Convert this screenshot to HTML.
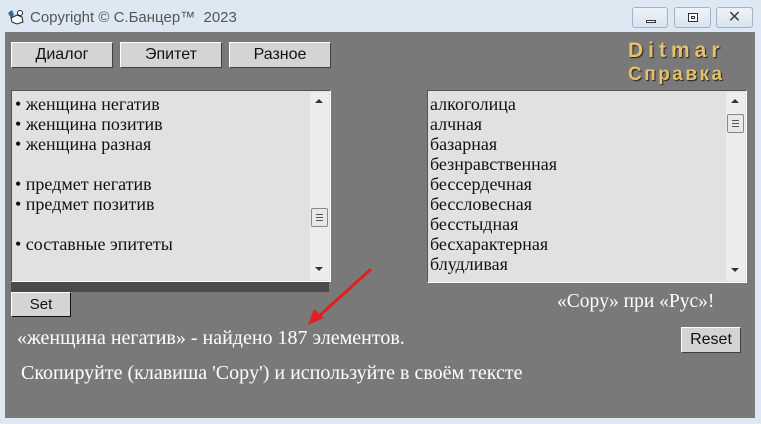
<!DOCTYPE html>
<html><head><meta charset="utf-8"><style>
*{margin:0;padding:0;box-sizing:border-box}
body{width:761px;height:424px;background:#dde8f3;position:relative;overflow:hidden;font-family:"Liberation Serif",serif}
.t{position:absolute;left:30px;top:9px;font:15px "Liberation Sans",sans-serif;color:#555}
.wb{position:absolute;top:7px;height:21px;border:1px solid #9fb2c7;border-radius:3px;background:linear-gradient(#eef3f8,#d9e3ee)}
.main{position:absolute;left:5px;top:32px;width:750px;height:386px;background:#797979}
.btn{position:absolute;background:#d4d4d4;border:1px solid;border-color:#fff #404040 #404040 #fff;font:16px "Liberation Sans",sans-serif;color:#111;text-align:center}
.list{position:absolute;background:#e1e1e1;border:1px solid;border-color:#555 #fff #fff #555;font-size:18px;color:#111;line-height:20px;white-space:nowrap}
.sb{position:absolute;right:1px;top:1px;bottom:1px;width:19px;background:#ececec}
.ar{position:absolute;left:5px;width:0;height:0;border-left:4px solid transparent;border-right:4px solid transparent}
.th{position:absolute;left:1px;width:17px;height:19px;background:#e8e8e8;border:1px solid #888;border-radius:2px}
.th i{position:absolute;left:4px;width:7px;height:1px;background:#555}
.w{position:absolute;color:#fff;font-size:20px;white-space:nowrap}
</style></head><body>
<svg style="position:absolute;left:6px;top:9px" width="20" height="17"><path d="M2 4l4-3 2 5-3 3z" fill="#3a6a8a"/><path d="M5 9l6-3 5 2 1 5-6 2-5-2z" fill="#fff" stroke="#222"/><circle cx="14" cy="4" r="2.5" fill="#fff" stroke="#222"/></svg>
<div class="t">Copyright © С.Банцер™&nbsp; 2023</div>
<div class="wb" style="left:632px;width:36px"><div style="position:absolute;left:13px;top:12px;width:10px;height:3px;background:#fff;border:1px solid #333"></div></div>
<div class="wb" style="left:674px;width:37px"><div style="position:absolute;left:13px;top:5px;width:10px;height:9px;border:1px solid #333;background:#fff"><div style="margin:2px;width:4px;height:3px;border:1px solid #333"></div></div></div>
<div class="wb" style="left:716px;width:37px;text-align:center;font:16px 'Liberation Sans',sans-serif;line-height:19px;color:#444">✕</div>
<div class="main"></div>
<div class="btn" style="left:11px;top:42px;width:102px;height:26px;line-height:24px">Диалог</div>
<div class="btn" style="left:120px;top:42px;width:102px;height:26px;line-height:24px">Эпитет</div>
<div class="btn" style="left:229px;top:42px;width:102px;height:26px;line-height:24px">Разное</div>
<div style="position:absolute;left:628px;top:39px;font:bold 21px 'Liberation Sans',sans-serif;color:#e6c06a;text-shadow:1px 1px 1px #222;letter-spacing:5px">Ditmar</div>
<div style="position:absolute;left:628px;top:64px;font:bold 19px 'Liberation Sans',sans-serif;color:#e6c06a;text-shadow:1px 1px 1px #222;letter-spacing:2.5px">Справка</div>
<div style="position:absolute;left:11px;top:281px;width:318px;height:11px;background:#4a4a4a"></div>
<div class="list" style="left:11px;top:90px;width:320px;height:192px;padding:3px 0 0 3px">
<div>• женщина негатив</div><div>• женщина позитив</div><div>• женщина разная</div><div>&nbsp;</div><div>• предмет негатив</div><div>• предмет позитив</div><div>&nbsp;</div><div>• составные эпитеты</div>
<div class="sb"><div class="ar" style="top:7px;border-bottom:4px solid #333"></div><div class="th" style="top:116px"><i style="top:5px"></i><i style="top:8px"></i><i style="top:11px"></i></div><div class="ar" style="bottom:9px;border-top:4px solid #333"></div></div>
</div>
<div class="list" style="left:427px;top:90px;width:320px;height:193px;padding:3px 0 0 2px">
<div>алкоголица</div><div>алчная</div><div>базарная</div><div>безнравственная</div><div>бессердечная</div><div>бессловесная</div><div>бесстыдная</div><div>бесхарактерная</div><div>блудливая</div>
<div class="sb"><div class="ar" style="top:7px;border-bottom:4px solid #333"></div><div class="th" style="top:22px"><i style="top:5px"></i><i style="top:8px"></i><i style="top:11px"></i></div><div class="ar" style="bottom:9px;border-top:4px solid #333"></div></div>
</div>
<div class="btn" style="left:11px;top:292px;width:60px;height:25px;line-height:23px;border-color:#fff #111 #111 #fff;font-size:15px">Set</div>
<div class="btn" style="left:681px;top:327px;width:60px;height:26px;line-height:24px">Reset</div>
<svg style="position:absolute;left:300px;top:265px" width="80" height="65"><line x1="70" y1="5" x2="18" y2="52" stroke="#e02020" stroke-width="3" stroke-linecap="round"/><path d="M8 60l6-16 10 9z" fill="#e02020"/></svg>
<div class="w" style="left:17px;top:327px">«женщина негатив» - найдено 187 элементов.</div>
<div class="w" style="left:21px;top:362px">Скопируйте (клавиша 'Copy') и используйте в своём тексте</div>
<div class="w" style="left:557px;top:291px;font-size:19.5px">«Copy» при «Рус»!</div>
</body></html>
